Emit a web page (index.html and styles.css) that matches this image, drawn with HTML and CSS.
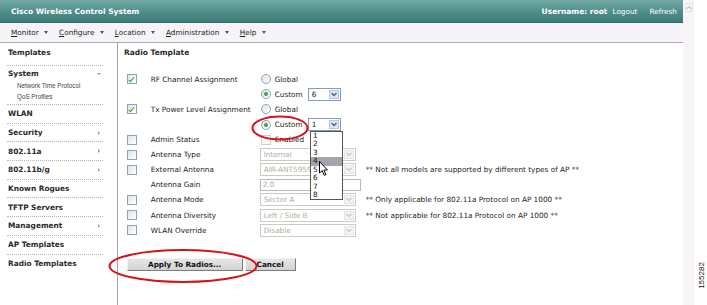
FILE: index.html
```html
<!DOCTYPE html>
<html lang="en">

<head>
    <meta charset="UTF-8">
    <title>Cisco Wireless Control System - Radio Template</title>
    <link rel="stylesheet" href="styles.css">
</head>

<body>
    <div class="screen">
        <div class="app">
            <header class="topbar">
                <span class="brand">Cisco Wireless Control System</span>
                <span class="session">
                    <b>Username: root</b>
                    <a>Logout</a>
                    <a class="refresh">Refresh</a>
                </span>
            </header>
            <nav class="menubar">
                <span class="menu"><u>M</u>onitor <i class="caret"></i></span>
                <span class="menu"><u>C</u>onfigure <i class="caret"></i></span>
                <span class="menu"><u>L</u>ocation <i class="caret"></i></span>
                <span class="menu"><u>A</u>dministration <i class="caret"></i></span>
                <span class="menu"><u>H</u>elp <i class="caret"></i></span>
            </nav>
            <div class="workspace">
                <aside class="sidebar">
                    <div class="side-title">Templates</div>
                    <div class="side-group">
                        <div class="side-head">System <i class="arrow-down"></i></div>
                        <div class="side-sub">Network Time Protocol</div>
                        <div class="side-sub">QoS Profiles</div>
                    </div>
                    <div class="side-item">WLAN</div>
                    <div class="side-item">Security <i class="arrow-right"></i></div>
                    <div class="side-item">802.11a <i class="arrow-right"></i></div>
                    <div class="side-item">802.11b/g <i class="arrow-right"></i></div>
                    <div class="side-item">Known Rogues</div>
                    <div class="side-item">TFTP Servers</div>
                    <div class="side-item">Management <i class="arrow-right"></i></div>
                    <div class="side-item">AP Templates</div>
                    <div class="side-item last">Radio Templates</div>
                </aside>
                <main class="content">
                    <h2 class="page-title">Radio Template</h2>
                    <div class="form-grid">
                        <span class="check on"></span>
                        <span class="label">RF Channel Assignment</span>
                        <span class="field"><span class="radio"></span><span class="opt">Global</span></span>

                        <span></span><span></span>
                        <span class="field"><span class="radio on"></span><span class="opt wide">Custom</span>
                            <span class="select small"><span class="value">6</span><span class="drop"></span></span></span>

                        <span class="check on"></span>
                        <span class="label">Tx Power Level Assignment</span>
                        <span class="field"><span class="radio"></span><span class="opt">Global</span></span>

                        <span></span><span></span>
                        <span class="field"><span class="radio on"></span><span class="opt wide">Custom</span>
                            <span class="select small"><span class="value">1</span><span class="drop"></span></span></span>

                        <span class="check"></span>
                        <span class="label">Admin Status</span>
                        <span class="field"><span class="check muted"></span><span class="opt">Enabled</span></span>

                        <span class="check"></span>
                        <span class="label">Antenna Type</span>
                        <span class="field"><span class="select off"><span class="value">Internal</span><span class="drop"></span></span></span>

                        <span class="check"></span>
                        <span class="label">External Antenna</span>
                        <span class="field"><span class="select off"><span class="value">AIR-ANT5959</span><span class="drop"></span></span>
                            <span class="note">** Not all models are supported by different types of AP **</span></span>

                        <span></span>
                        <span class="label">Antenna Gain</span>
                        <span class="field"><span class="textbox">2.0</span></span>

                        <span class="check"></span>
                        <span class="label">Antenna Mode</span>
                        <span class="field"><span class="select off"><span class="value">Sector A</span><span class="drop"></span></span>
                            <span class="note">** Only applicable for 802.11a Protocol on AP 1000 **</span></span>

                        <span class="check"></span>
                        <span class="label">Antenna Diversity</span>
                        <span class="field"><span class="select off"><span class="value">Left / Side B</span><span class="drop"></span></span>
                            <span class="note">** Not applicable for 802.11a Protocol on AP 1000 **</span></span>

                        <span class="check"></span>
                        <span class="label">WLAN Override</span>
                        <span class="field"><span class="select off"><span class="value">Disable</span><span class="drop"></span></span></span>
                    </div>
                    <div class="actions">
                        <button class="btn apply">Apply To Radios...</button>
                        <button class="btn cancel">Cancel</button>
                    </div>
                </main>
            </div>
        </div>
        <div class="scrolltrack"><span class="scroll-up"></span></div>
        <div class="gutter"><span class="figure-id">155282</span></div>

        <!-- open dropdown of the power level select -->
        <ul class="dropdown">
            <li>1</li>
            <li>2</li>
            <li>3</li>
            <li class="hover">4</li>
            <li>5</li>
            <li>6</li>
            <li>7</li>
            <li>8</li>
        </ul>
        <svg class="cursor" width="10" height="16" viewBox="0 0 10 16">
            <path d="M0.5 0.5 L0.5 12 L3.2 9.6 L5.2 14.3 L6.9 13.6 L4.9 9 L8.4 9 Z" fill="#fff" stroke="#000" stroke-width="1" stroke-linejoin="round"/>
        </svg>

        <!-- red hand drawn callouts -->
        <svg class="mark mark-custom" width="60" height="28" viewBox="0 0 60 28">
            <ellipse cx="30" cy="14" rx="27.5" ry="11.5" fill="none" stroke="#d8121b" stroke-width="2"/>
        </svg>
        <svg class="mark mark-apply" width="154" height="38" viewBox="0 0 154 38">
            <ellipse cx="77" cy="19" rx="73.5" ry="16" fill="none" stroke="#d8121b" stroke-width="2"/>
        </svg>
    </div>
</body>

</html>
```

FILE: styles.css
```css
body {
    margin: 0;
    background-color: #fff;
    font-family: "DejaVu Sans", Verdana, sans-serif;
    font-size: 7.3px;
    color: #1e1e1e;
}

.screen {
    position: relative;
    display: flex;
    width: 707px;
    height: 305px;
    overflow: hidden;
}

.app {
    width: 683px;
    display: flex;
    flex-direction: column;
}

/* top title bar */
.topbar {
    height: 22px;
    display: flex;
    align-items: center;
    justify-content: space-between;
    padding: 0 6px 0 11px;
    background: linear-gradient(#72aaa7, #4c8b88 60%, #3e7c79);
    border-bottom: 1px solid #2f6664;
    color: #fff;
}

.brand {
    font-weight: bold;
    font-size: 7.5px;
}

.session {
    display: flex;
    align-items: center;
    gap: 5px;
}

.session b {
    font-size: 7.5px;
}

.session .refresh {
    margin-left: 7px;
}

/* menu bar */
.menubar {
    height: 19px;
    display: flex;
    align-items: center;
    gap: 11px;
    padding-left: 11px;
    background-color: #f7f4f9;
    border-bottom: 1px solid #a9a9a9;
    color: #222;
}

.menu u {
    text-decoration: underline;
}

.caret {
    display: inline-block;
    margin-left: 3px;
    vertical-align: 1px;
    border-left: 2.5px solid transparent;
    border-right: 2.5px solid transparent;
    border-top: 3px solid #555;
}

.workspace {
    flex: 1;
    display: flex;
}

/* left navigation */
.sidebar {
    width: 96px;
    padding: 0 14px 0 7px;
    border-right: 1px solid #a3a3a3;
    font-weight: bold;
    font-size: 7.4px;
    color: #2a2a2a;
}

.side-title {
    height: 23px;
    padding: 5px 0 0 1px;
    box-sizing: border-box;
    line-height: 10px;
    border-bottom: 1px dotted #b5b5b5;
}

.side-group {
    padding: 0 0 3px 1px;
    border-bottom: 1px dotted #b5b5b5;
}

.side-head {
    height: 13px;
    line-height: 13px;
    display: flex;
    justify-content: space-between;
    align-items: center;
    margin-top: 1px;
}

.side-sub {
    height: 10.5px;
    line-height: 11px;
    padding-left: 9px;
    font-family: "Liberation Sans", Arial, sans-serif;
    font-weight: normal;
    font-size: 6.3px;
    color: #444;
}

.side-item {
    height: 17.7px;
    display: flex;
    justify-content: space-between;
    align-items: center;
    padding-left: 1px;
    border-bottom: 1px dotted #b5b5b5;
}

.side-item.last {
    border-bottom: none;
}

.arrow-down {
    margin-right: 2px;
    border-left: 2px solid transparent;
    border-right: 2px solid transparent;
    border-top: 2.5px solid #9a9a9a;
}

.arrow-right {
    margin-right: 3px;
    border-top: 2px solid transparent;
    border-bottom: 2px solid transparent;
    border-left: 2.5px solid #9a9a9a;
}

/* main form */
.content {
    flex: 1;
    padding: 4px 0 0 6px;
}

.page-title {
    margin: 0;
    font-size: 7.5px;
    line-height: 12px;
    color: #2a2a2a;
}

.form-grid {
    display: grid;
    grid-template-columns: 24px 109px auto;
    grid-auto-rows: 15.1px;
    align-items: center;
    margin: 12.7px 0 0 2.7px;
}

.label {
    white-space: nowrap;
}

.field {
    display: flex;
    align-items: center;
    white-space: nowrap;
}

.check {
    display: inline-block;
    width: 8px;
    height: 8px;
    border: 1px solid #8fa3b6;
    background: linear-gradient(135deg, #dfe4e8, #fff);
    position: relative;
}

.check.on::after {
    content: "";
    position: absolute;
    left: 2px;
    top: 0.5px;
    width: 2px;
    height: 4.5px;
    border-right: 1.5px solid #2e9c2e;
    border-bottom: 1.5px solid #2e9c2e;
    transform: rotate(40deg);
}

.check.muted {
    border-color: #cfcfcf;
    background: #fafafa;
    margin-left: 1px;
}

.radio {
    display: inline-block;
    width: 8px;
    height: 8px;
    margin-left: 1px;
    border: 1px solid #8fa3b6;
    border-radius: 50%;
    background: linear-gradient(135deg, #dfe4e8, #fff);
    position: relative;
}

.radio.on::after {
    content: "";
    position: absolute;
    left: 2px;
    top: 2px;
    width: 4px;
    height: 4px;
    border-radius: 50%;
    background-color: #3aa53a;
}

.opt {
    margin-left: 4px;
}

.opt.wide {
    width: 33px;
}

.select {
    display: inline-flex;
    align-items: center;
    box-sizing: border-box;
    height: 13px;
    border: 1px solid #7f9db9;
    background-color: #fff;
}

.select .value {
    flex: 1;
    padding-left: 3px;
    overflow: hidden;
}

.select .drop {
    width: 10px;
    height: 9px;
    margin-right: 1px;
    border: 1px solid #b5c5e6;
    background: #dfe6f8 url("data:image/svg+xml;utf8,<svg xmlns='http://www.w3.org/2000/svg' width='10' height='9'><path d='M2.5 3 L5 5.5 L7.5 3' fill='none' stroke='%234d6185' stroke-width='1.4'/></svg>") no-repeat center;
    box-sizing: border-box;
}

.select.small {
    width: 33px;
}

.select.off {
    width: 96px;
    border-color: #cbcbc4;
    color: #b0aea4;
}

.select.off .drop {
    border-color: #e4e4e4;
    background: #f4f4f4 url("data:image/svg+xml;utf8,<svg xmlns='http://www.w3.org/2000/svg' width='10' height='9'><path d='M2.5 3 L5 5.5 L7.5 3' fill='none' stroke='%23c4c4c4' stroke-width='1.2'/></svg>") no-repeat center;
}

.textbox {
    box-sizing: border-box;
    width: 101px;
    height: 12px;
    line-height: 10px;
    padding-left: 2px;
    border: 1px solid #b8b8b8;
    color: #aaa;
}

.note {
    margin-left: 10px;
}

.actions {
    display: flex;
    gap: 2px;
    margin: 20.5px 0 0 2.7px;
}

.btn {
    height: 13px;
    padding: 0;
    font-family: inherit;
    font-size: 7.3px;
    font-weight: bold;
    color: #111;
    background: linear-gradient(#e6e6e6, #d2d2d2);
    border: 1px solid;
    border-color: #f2f2f2 #7c7c7c #7c7c7c #f2f2f2;
}

.btn.apply {
    width: 116px;
}

.btn.cancel {
    width: 51px;
}

/* right edge */
.scrolltrack {
    width: 11px;
    background-color: #f8f4f8;
}

.scroll-up {
    display: block;
    width: 8px;
    height: 9px;
    margin: 3px 0 0 2px;
    background: url("data:image/svg+xml;utf8,<svg xmlns='http://www.w3.org/2000/svg' width='8' height='9'><path d='M1.5 6 L4 3.5 L6.5 6' fill='none' stroke='%23c8c8c8' stroke-width='1.2'/></svg>") no-repeat center;
    border: 1px solid #e8e4e8;
    box-sizing: border-box;
}

.gutter {
    flex: 1;
    position: relative;
}

.figure-id {
    position: absolute;
    left: -6px;
    top: 271px;
    transform: rotate(-90deg);
    font-family: "Liberation Sans", Arial, sans-serif;
    font-size: 8px;
    color: #111;
}

/* overlays */
.dropdown {
    position: absolute;
    left: 310px;
    top: 131px;
    width: 33px;
    height: 69px;
    box-sizing: border-box;
    margin: 0;
    padding: 0;
    list-style: none;
    background-color: #fff;
    border: 1px solid #555;
}

.dropdown li {
    height: 8.45px;
    line-height: 8.45px;
    padding-left: 2px;
    color: #111;
}

.dropdown li.hover {
    background-color: #a4a4ac;
}

.cursor {
    position: absolute;
    left: 319px;
    top: 161px;
}

.mark {
    position: absolute;
}

.mark-custom {
    left: 250px;
    top: 114px;
}

.mark-apply {
    left: 106px;
    top: 247px;
}
```
